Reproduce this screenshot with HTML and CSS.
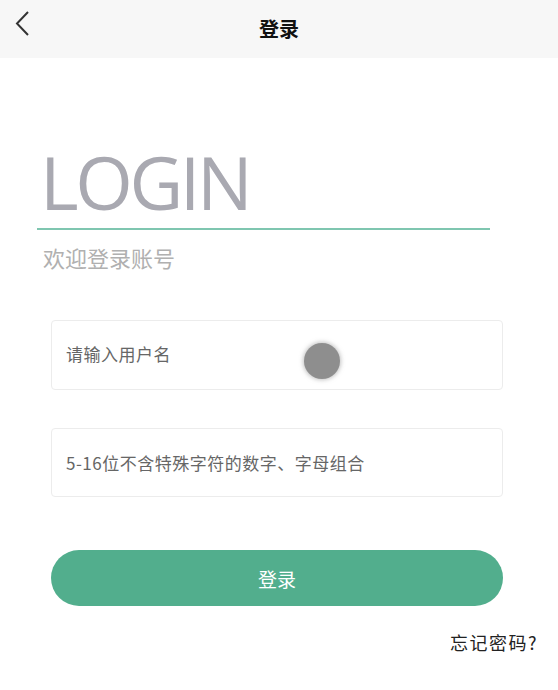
FILE: index.html
```html
<!DOCTYPE html>
<html lang="zh-CN">
<head>
<meta charset="utf-8">
<title>登录</title>
<link rel="stylesheet" href="styles.css">
</head>
<body>
<header class="topbar">
  <button class="back" aria-label="返回">
    <svg width="20" height="28" viewBox="0 0 20 28"><polyline points="13,1 2,12.5 13,24" fill="none" stroke="#333" stroke-width="2"/></svg>
  </button>
  <h1 class="title">登录</h1>
  <span></span>
</header>
<main class="main">
  <section class="hero">
    <div class="login-word">LOGIN</div>
    <div class="rule"></div>
    <p class="welcome">欢迎登录账号</p>
  </section>
  <form class="form">
    <div class="field">
      <input type="text" placeholder="请输入用户名">
      <span class="touch"></span>
    </div>
    <div class="field field-second">
      <input type="password" placeholder="5-16位不含特殊字符的数字、字母组合">
    </div>
    <button type="button" class="submit">登录</button>
  </form>
  <div class="forgot-row"><a class="forgot">忘记密码?</a></div>
</main>
</body>
</html>
```
FILE: styles.css
```css
* { box-sizing: border-box; }
html, body { margin: 0; padding: 0; background: #fff; }
body {
  font-family: "Noto Sans CJK SC", "Noto Sans", sans-serif;
  width: 558px;
  height: 690px;
  overflow: hidden;
}
.topbar {
  height: 58px;
  background: #f7f7f7;
  display: grid;
  grid-template-columns: 58px 1fr 58px;
  align-items: center;
}
.back {
  border: 0;
  background: none;
  padding: 0 0 0 15px;
  margin: 0;
  height: 58px;
  display: flex;
  align-items: center;
  justify-content: flex-start;
  margin-top: -8px;
}
.back svg { display: block; }
.title {
  margin: 0;
  text-align: center;
  font-size: 20px;
  font-weight: 700;
  color: #111;
  line-height: 58px;
}
.main { display: flex; flex-direction: column; }
.hero {
  padding-left: 37px;
  width: 490px;
  display: flex;
  flex-direction: column;
}
.login-word {
  margin-top: 87px;
  padding-left: 3px;
  font-family: "Open Sans", sans-serif;
  font-size: 74px;
  line-height: 74px;
  color: #a9a9b1;
  letter-spacing: -3.4px;
}
.rule {
  margin-top: 9px;
  height: 2px;
  width: 453px;
  background: #7fc6b0;
}
.welcome {
  margin: 16px 0 0 6px;
  font-size: 22px;
  line-height: 22px;
  color: #b0b0b0;
}
.form {
  margin-top: 52px;
  padding: 0 55px 0 51px;
  display: flex;
  flex-direction: column;
}
.field {
  position: relative;
  height: 70px;
  border: 1px solid #ececec;
  border-radius: 4px;
  display: flex;
  align-items: center;
}
.field-second { margin-top: 38px; height: 69px; }
.field input {
  border: 0;
  outline: none;
  background: transparent;
  width: 100%;
  height: 100%;
  padding: 0 0 0 14px;
  font-family: "Noto Sans CJK SC", sans-serif;
  font-size: 17px;
  letter-spacing: 0.5px;
  color: #333;
}
.field input::placeholder { color: #666; }
.field:first-child input { padding-bottom: 3px; }
.touch {
  position: absolute;
  left: 252px;
  top: 22px;
  width: 36px;
  height: 36px;
  border-radius: 50%;
  background: #8e8e8e;
  box-shadow: 0 0 4px 1px rgba(142,142,142,0.55);
}
.submit {
  margin-top: 53px;
  height: 56px;
  border: 0;
  border-radius: 28px;
  background: #52ae8d;
  color: #fff;
  font-family: "Noto Sans CJK SC", sans-serif;
  font-size: 19px;
}
.forgot-row {
  display: flex;
  justify-content: flex-end;
  padding-right: 20px;
  margin-top: 24px;
}
.forgot {
  font-size: 18px;
  line-height: 24px;
  letter-spacing: 1.5px;
  color: #222;
}
```
